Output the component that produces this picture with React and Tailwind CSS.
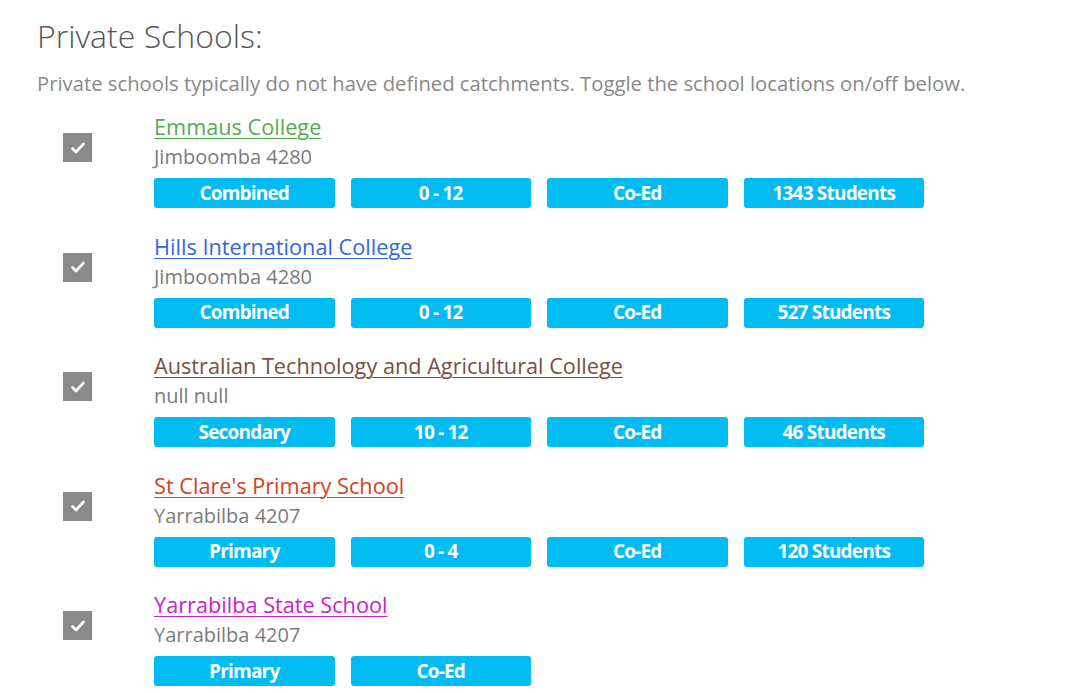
import React, { useState } from 'react';

const schools = [
  {
    name: 'Emmaus College',
    color: 'text-[#55aa55] decoration-[#55aa55]',
    address: 'Jimboomba 4280',
    tags: ['Combined', '0 - 12', 'Co-Ed', '1343 Students'],
  },
  {
    name: 'Hills International College',
    color: 'text-[#3366dd] decoration-[#3366dd]',
    address: 'Jimboomba 4280',
    tags: ['Combined', '0 - 12', 'Co-Ed', '527 Students'],
  },
  {
    name: 'Australian Technology and Agricultural College',
    color: 'text-[#7a4e3e] decoration-[#7a4e3e]',
    address: 'null null',
    tags: ['Secondary', '10 - 12', 'Co-Ed', '46 Students'],
  },
  {
    name: "St Clare's Primary School",
    color: 'text-[#d2421c] decoration-[#d2421c]',
    address: 'Yarrabilba 4207',
    tags: ['Primary', '0 - 4', 'Co-Ed', '120 Students'],
  },
  {
    name: 'Yarrabilba State School',
    color: 'text-[#c822cc] decoration-[#c822cc]',
    address: 'Yarrabilba 4207',
    tags: ['Primary', 'Co-Ed'],
  },
];

const Checkbox = ({ checked, onToggle }) => (
  <button
    type="button"
    onClick={onToggle}
    className={`mt-[21px] w-[29px] h-[29px] flex items-center justify-center ${checked ? 'bg-[#8a8a8a]' : 'bg-white border-2 border-[#8a8a8a]'}`}
    aria-pressed={checked}
  >
    {checked && (
      <svg width="18" height="18" viewBox="0 0 18 18" fill="none">
        <path d="M3.5 9.5l3.5 3.5 7.5-8" stroke="white" strokeWidth="2.6" strokeLinecap="round" strokeLinejoin="round" />
      </svg>
    )}
  </button>
);

const SchoolRow = ({ school, checked, onToggle }) => (
  <div className="flex items-start mb-[23.5px]">
    <div className="w-[117px] pl-[26px] flex-shrink-0">
      <Checkbox checked={checked} onToggle={onToggle} />
    </div>
    <div className="flex flex-col">
      <a href="#" className={`text-[21.7px] leading-[30px] underline underline-offset-[3px] decoration-1 ${school.color}`}>
        {school.name}
      </a>
      <div className="text-[20px] leading-[30px] text-[#7b7b7b]">{school.address}</div>
      <div className="flex gap-4 mt-[6px]">
        {school.tags.map((tag) => (
          <span
            key={tag}
            className="w-[180.5px] h-[30px] rounded-[3px] bg-[#00bcf2] text-white font-bold text-[19px] tracking-[-0.8px] flex items-center justify-center"
          >
            {tag}
          </span>
        ))}
      </div>
    </div>
  </div>
);

const App = () => {
  const [checked, setChecked] = useState(schools.map(() => true));

  const toggle = (i) => {
    setChecked(checked.map((c, j) => (j === i ? !c : c)));
  };

  return (
    <div className="w-[1080px] h-[693px] overflow-hidden bg-white pl-[37px] pt-[16px]" style={{ fontFamily: '"Open Sans", sans-serif' }}>
      <h2 className="text-[32px] leading-[40px] font-light text-[#555555]">Private Schools:</h2>
      <p className="text-[20.25px] leading-[26px] text-[#888888] mt-[14px]">
        Private schools typically do not have defined catchments. Toggle the school locations on/off below.
      </p>
      <div className="mt-[16px]">
        {schools.map((s, i) => (
          <SchoolRow key={s.name} school={s} checked={checked[i]} onToggle={() => toggle(i)} />
        ))}
      </div>
    </div>
  );
};

export default App;
